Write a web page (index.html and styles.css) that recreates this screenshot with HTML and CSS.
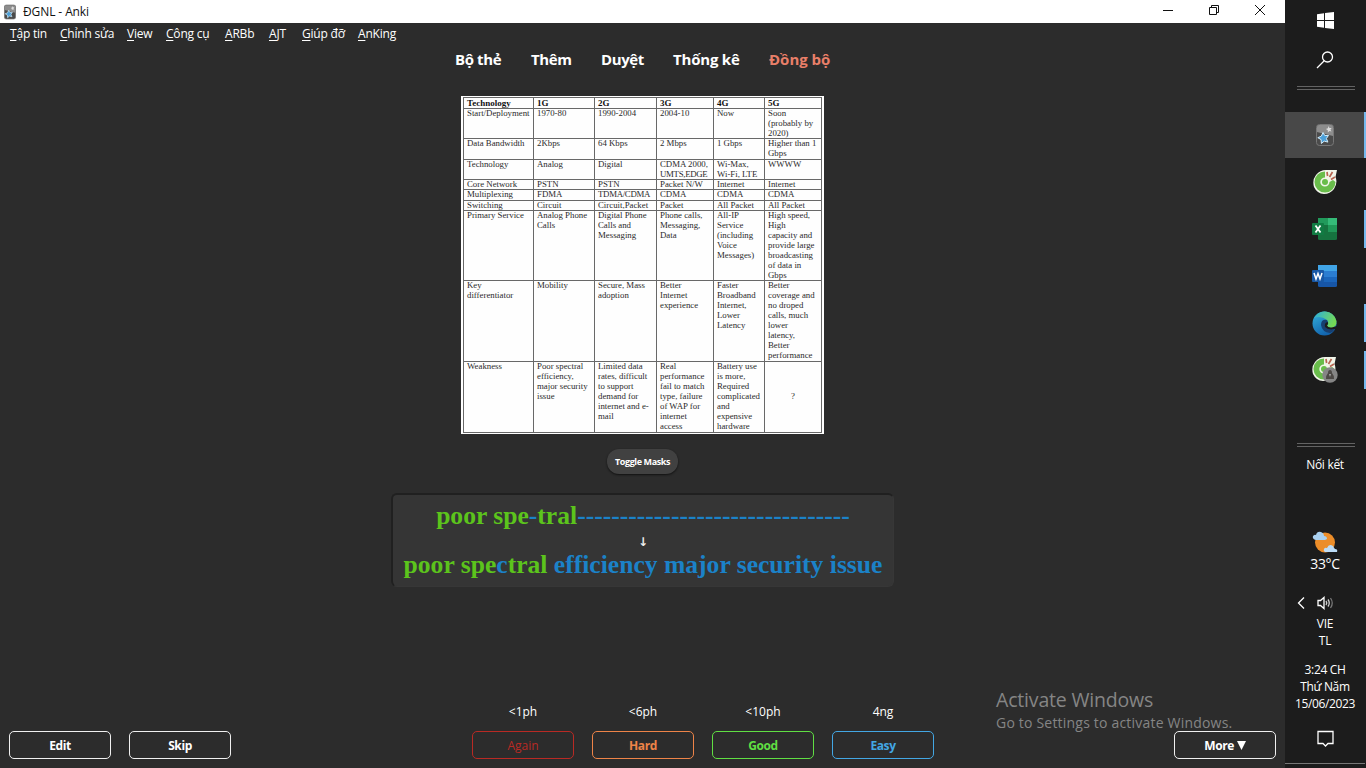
FILE: index.html
```html
<!DOCTYPE html>
<html lang="vi">
<head>
<meta charset="utf-8">
<title>ĐGNL - Anki</title>
<link rel="stylesheet" href="styles.css">
</head>
<body>
<svg class="defs" aria-hidden="true">
  <defs>
    <linearGradient id="edgeBlue" x1="0" y1="0" x2="0.5" y2="1"><stop offset="0" stop-color="#35b3dc"/><stop offset="1" stop-color="#1263ad"/></linearGradient>
    <linearGradient id="edgeGreen" x1="0" y1="0" x2="1" y2="0.4"><stop offset="0" stop-color="#2baee0"/><stop offset="1" stop-color="#74da55"/></linearGradient>
    <symbol id="anki" viewBox="0 0 18 22">
      <rect x=".5" y=".5" width="17" height="21" rx="3" fill="#4b4b4b" stroke="#777"/>
      <path d="M1 3Q1 1 3 1H15Q17 1 17 3V12L1 8Z" fill="#8d8d8d"/>
      <path d="M12.6 2l.8 2 2.2-.1-1.2 1.8 1.1 1.9-2.1-.6-1.6 1.5V6.2L9.900 5.100l2-.8z" fill="#ddd"/>
      <path d="M7 8.500l1.800 3.100 3.700-.2-2.100 3.100 1.500 3.600-3.700-1-2.800 2.400-.3-3.900-3.300-1.900 3.500-1.500z" fill="#4b9fd8" stroke="#d3edfb"/>
    </symbol>
    <symbol id="coccoc" viewBox="0 0 24 24">
      <path d="M13 0H24L22.500 7Q25 13 21 19Q17 24 11 24Q4 23.500 1 17Q-1 10 3 5Q7 0 13 0Z" fill="#f1f5e9"/>
      <path d="M12 1.500A10.500 10.500 0 1 0 22.500 12L20 10L16.500 12A4.600 4.600 0 1 1 12 7.400Z" fill="#69bd4b"/>
      <circle cx="12" cy="12" r="3" fill="#69bd4b"/>
      <path d="M14 2l.6 4M19.500 2l-3 5M22 7l-4 2.500" stroke="#b76551" stroke-width="1.700"/>
    </symbol>
  </defs>
</svg>
<div class="desktop">
  <main class="window">
    <header class="titlebar">
      <svg class="title-icon"><use href="#anki"/></svg>
      <span class="title-text">ĐGNL - Anki</span>
      <div class="controls">
        <svg viewBox="0 0 12 12"><path d="M1 6.500H11"/></svg>
        <svg viewBox="0 0 12 12"><path d="M1.500 3.500H8.500V10.500H1.500ZM3.500 3.500V1.500H10.500V8.500H8.500"/></svg>
        <svg viewBox="0 0 12 12"><path d="M1 1L11 11M11 1L1 11"/></svg>
      </div>
    </header>
    <nav class="menubar">
      <span><u>T</u>ập tin</span><span><u>C</u>hỉnh sửa</span><span><u>V</u>iew</span><span><u>C</u>ông cụ</span><span><u>A</u>RBb</span><span><u>A</u>JT</span><span><u>G</u>iúp đỡ</span><span><u>A</u>nKing</span>
    </nav>
    <nav class="toolbar">
      <span>Bộ thẻ</span><span>Thêm</span><span>Duyệt</span><span class="stats">Thống kê</span><span class="sync">Đồng bộ</span>
    </nav>
    <section class="card">
      <div class="sheet">
        <div class="grid">
          <b>Technology</b><b>1G</b><b>2G</b><b>3G</b><b>4G</b><b>5G</b>
          <div>Start/Deployment</div><div>1970-80</div><div>1990-2004</div><div>2004-10</div><div>Now</div><div>Soon<br>(probably by<br>2020)</div>
          <div>Data Bandwidth</div><div>2Kbps</div><div>64 Kbps</div><div>2 Mbps</div><div>1 Gbps</div><div>Higher than 1<br>Gbps</div>
          <div>Technology</div><div>Analog</div><div>Digital</div><div>CDMA 2000,<br><i>UMTS,EDGE</i></div><div>Wi-Max,<br>Wi-Fi, LTE</div><div>WWWW</div>
          <div>Core Network</div><div>PSTN</div><div>PSTN</div><div>Packet N/W</div><div>Internet</div><div>Internet</div>
          <div>Multiplexing</div><div>FDMA</div><div><i>TDMA/CDMA</i></div><div>CDMA</div><div>CDMA</div><div>CDMA</div>
          <div>Switching</div><div>Circuit</div><div>Circuit,Packet</div><div>Packet</div><div>All Packet</div><div>All Packet</div>
          <div>Primary Service</div><div>Analog Phone<br>Calls</div><div>Digital Phone<br>Calls and<br>Messaging</div><div>Phone calls,<br>Messaging,<br>Data</div><div>All-IP<br>Service<br>(including<br>Voice<br>Messages)</div><div>High speed,<br>High<br>capacity and<br>provide large<br>broadcasting<br>of data in<br>Gbps</div>
          <div>Key<br>differentiator</div><div>Mobility</div><div>Secure, Mass<br>adoption</div><div>Better<br>Internet<br>experience</div><div>Faster<br>Broadband<br>Internet,<br>Lower<br>Latency</div><div>Better<br>coverage and<br>no droped<br>calls, much<br>lower<br>latency,<br>Better<br>performance</div>
          <div>Weakness</div><div>Poor spectral<br>efficiency,<br>major security<br>issue</div><div>Limited data<br>rates, difficult<br>to support<br>demand for<br>internet and e-<br>mail</div><div>Real<br>performance<br>fail to match<br>type, failure<br>of WAP for<br>internet<br>access</div><div>Battery use<br>is more,<br>Required<br>complicated<br>and<br>expensive<br>hardware</div><div class="unknown">?</div>
        </div>
      </div>
      <button class="toggle">Toggle Masks</button>
      <div class="answer">
        <div class="typed"><span class="good">poor spe</span>-<span class="good">tral</span>--------------------------------</div>
        <div class="arrow">↓</div>
        <div class="typed"><span class="good">poor spe</span>c<span class="good">tral</span> efficiency major security issue</div>
      </div>
    </section>
    <footer class="bottom">
      <div class="group left"><button>Edit</button><button>Skip</button></div>
      <div class="group ease">
        <div><span>&lt;1ph</span><button class="again">Again</button></div>
        <div><span>&lt;6ph</span><button class="hard">Hard</button></div>
        <div><span>&lt;10ph</span><button class="easygood">Good</button></div>
        <div><span>4ng</span><button class="easy">Easy</button></div>
      </div>
      <div class="group right"><button>More <svg class="tri" viewBox="0 0 9 9"><path d="M0 0H9L4.500 9Z"/></svg></button></div>
    </footer>
    <div class="watermark"><p class="wm-title">Activate Windows</p><p class="wm-sub">Go to Settings to activate Windows.</p></div>
  </main>
  <aside class="taskbar">
    <div class="start"><svg width="17" height="17" viewBox="0 0 17 17" fill="#fff"><path d="M0 2.300L7 1.300V8H0ZM8 1.100L17 0V8H8ZM0 9H7V15.700L0 14.700ZM8 9H17V17L8 15.900Z"/></svg></div>
    <div class="search"><svg width="18" height="18" viewBox="0 0 18 18" fill="none" stroke="#fff" stroke-width="1.300"><circle cx="11.500" cy="6" r="5"/><path d="M8 10L1 17"/></svg></div>
    <div class="divider"></div>
    <div class="apps">
      <div class="app active"><svg width="18" height="22"><use href="#anki"/></svg></div>
      <div class="app"><svg width="24" height="24"><use href="#coccoc"/></svg></div>
      <div class="app open"><svg width="25" height="22" viewBox="0 0 25 22"><rect x="6" width="19" height="22" rx="1.500" fill="#16733f"/><path d="M6 0H16V7H6Z" fill="#219a5b"/><path d="M16 0H25V7H16Z" fill="#35bb78"/><path d="M16 7H25V14H16Z" fill="#209858"/><rect y="5" width="12" height="12" rx="1" fill="#117b43"/><path d="M3.500 7.500L8.500 14.500M8.500 7.500L3.500 14.500" stroke="#fff" stroke-width="1.800"/></svg></div>
      <div class="app"><svg width="25" height="22" viewBox="0 0 25 22"><rect x="6" width="19" height="22" rx="1.500" fill="#1756a7"/><path d="M6 0H25V6H6Z" fill="#41a5e7"/><path d="M6 6H25V12H6Z" fill="#2b7dd1"/><path d="M6 12H25V17H6Z" fill="#1b66bc"/><rect y="5" width="12" height="12" rx="1" fill="#1858a6"/><path d="M2 8L4 14L6 8.500L8 14L10 8" fill="none" stroke="#fff" stroke-width="1.500"/></svg></div>
      <div class="app open"><svg width="25" height="25" viewBox="0 0 25 25"><circle cx="12.500" cy="12.500" r="12" fill="url(#edgeBlue)"/><path d="M2 7Q6 0 13 .5Q22 1 24.500 10Q25 16 19 17Q15 17 15 14.500Q17 12 15 9Q9 4 2 7Z" fill="url(#edgeGreen)"/><path d="M15 9Q9 8 9 14Q10 21 18 22Q21 21 23 18Q16 19 14.500 15Q17 12 15 9Z" fill="#173f70"/><path d="M15.500 11Q17 12 15 14.500Q16 17 20 16.500L25 15V18.500L23 18Q16 19.500 13 16Q12 12 15.500 11Z" fill="#1c1c1c"/></svg></div>
      <div class="app open"><svg width="26" height="26" viewBox="0 0 26 26"><use href="#coccoc" width="24" height="24"/><circle cx="18" cy="18" r="7.700" fill="#858585"/><path d="M14 22Q14 18 16 16Q16 13 18 13Q20 13 20 16Q22 18 22 22Z" fill="#4c4845"/><path d="M17 17L18 20L19 17Z" fill="#aaa"/></svg></div>
    </div>
    <div class="divider lower"></div>
    <div class="connect">Nối kết</div>
    <div class="weather"><svg width="26" height="24" viewBox="0 0 26 24"><circle cx="13" cy="11.500" r="10" fill="#ec8d29"/><path d="M4 9Q0 8 1 5Q3 3 4 4Q5 0 9 1Q12 2 12 5Q15 5 15 8L13 9Z" fill="#a9d0f0"/><path d="M13 21Q11 20 12 18Q13 16 15 17Q17 12 21 15Q22 17 23 18Q26 18 25 21Z" fill="#bddcf6"/></svg><span>33°C</span></div>
    <div class="tray"><svg width="8" height="12" viewBox="0 0 8 12"><path d="M7 .5L1.500 6L7 11.500"/></svg><svg width="18" height="14" viewBox="0 0 18 14"><path d="M1 4.500H3.500L7 1.500V12.500L3.500 9.500H1Z"/><path d="M9 5Q10.500 7 9 9M11 3.500Q13.500 7 11 10.500" opacity=".8"/><path d="M13.500 2Q17 7 13.500 12" opacity=".4"/></svg></div>
    <div class="lang">VIE<br>TL</div>
    <div class="clock">3:24 CH<br>Thứ Năm<br><span>15/06/2023</span></div>
    <div class="notice"><svg width="17" height="17" viewBox="0 0 17 17"><path d="M1 1.500H16V13.500H11L8.500 16L6 13.500H1Z"/></svg></div>
  </aside>
</div>
</body>
</html>
```

FILE: styles.css
```css
* { box-sizing: border-box; }
body { margin: 0; width: 1366px; height: 768px; overflow: hidden; background: #1c1c1c; font-family: "Open Sans", "Noto Sans", sans-serif; color: #fff; }
.defs { position: absolute; width: 0; height: 0; }
.desktop { display: flex; height: 768px; }
.window { position: relative; width: 1285px; height: 768px; background: #2c2c2c; display: flex; flex-direction: column; }
.titlebar { height: 23px; flex: none; background: #fff; color: #111; display: flex; align-items: center; padding-left: 4px; }
.title-icon { width: 12px; height: 16px; }
.title-text { margin-left: 7px; font-size: 12px; letter-spacing: -.1px; }
.controls { margin-left: auto; display: flex; gap: 34px; padding: 0 19px 3px 0; }
.controls svg { width: 12px; height: 12px; fill: none; stroke: #111; }
.menubar { height: 22px; flex: none; display: grid; grid-template-columns: 50px 67px 39px 59px 44px 33px 56px 50px; padding-left: 10px; line-height: 22px; font-size: 12px; letter-spacing: -.2px; white-space: nowrap; }
.menubar u { text-underline-offset: 2px; }
.toolbar { flex: none; align-self: center; height: 30px; display: grid; grid-template-columns: 76px 70px 72px 96px 61px; font-size: 15px; line-height: 29px; font-weight: 700; letter-spacing: -.4px; white-space: nowrap; }
.stats { letter-spacing: -.2px; }
.sync { color: #e97f69; letter-spacing: 0; }
.card { display: flex; flex-direction: column; align-items: center; padding-top: 21px; }
.sheet { width: 363px; height: 338px; background: #fff; padding: 1px 2px; }
.grid { display: grid; width: 359px; height: 336px; padding: 1px; gap: 1px; background: #686868; grid-template-columns: 69px 60px 61px 56px 50px 56px; grid-template-rows: 10px 29px 20px 19px 9px 10px 9px 69px 80px 70px; font: 8.8px/10px "Liberation Serif", serif; color: #2b2b2b; white-space: nowrap; }
.grid > * { background: #fefefe; padding-left: 3px; min-width: 0; min-height: 0; }
.grid > div::before { content: ""; display: block; margin-top: -1px; }
.grid b { font-size: 9px; color: #111; }
.grid i { font-style: normal; letter-spacing: -.3px; }
.grid .unknown { padding: 30px 0 0; text-align: center; }
button { font-family: inherit; color: #fff; background: #2c2c2c; margin: 0; padding: 0; }
.toggle { margin-top: 15px; width: 71px; height: 25px; border: 0; border-radius: 12px; background: #414141; box-shadow: 0 1px 2px #111; font-size: 9px; font-weight: 700; letter-spacing: -.4px; }
.answer { margin-top: 19px; width: 503px; height: 94px; border-radius: 6px; border: 1px solid #373737; border-top: 2px solid #202020; border-left: 2px solid #202020; background: #353535; font-family: "Liberation Serif", serif; font-weight: 700; font-size: 25.6px; color: #1b82c8; text-align: center; white-space: nowrap; padding-top: 6px; }
.typed { line-height: 30px; }
.good { color: #5cc41c; }
.arrow { font: 700 12px/16px "DejaVu Sans", sans-serif; padding-top: 3px; color: #eee; }
.bottom { margin-top: auto; height: 68px; flex: none; position: relative; display: grid; grid-template-columns: 472px 1fr 111px; align-items: end; padding-bottom: 9px; }
.bottom button { width: 102px; height: 28px; border: 1px solid #f0f0f0; border-radius: 5px; font-size: 12px; font-weight: 700; letter-spacing: -.4px; }
.group { display: flex; gap: 18px; }
.left { padding-left: 9px; }
.ease > div { display: flex; flex-direction: column; align-items: center; gap: 10px; font-size: 12px; line-height: 18px; }
.bottom .again { color: #b92a24; border-color: #b92a24; font-weight: 400; letter-spacing: 0; }
.bottom .hard { color: #ee8448; border-color: #ee8448; }
.bottom .easygood { color: #60df43; border-color: #60df43; }
.bottom .easy { color: #43a7e4; border-color: #43a7e4; }
.tri { width: 9px; height: 9px; fill: #fff; }
.watermark { position: absolute; left: 996px; top: 687px; color: #858585; white-space: nowrap; pointer-events: none; }
.watermark p { margin: 0; }
.wm-title { font-size: 19.5px; line-height: 25px; letter-spacing: -.18px; }
.wm-sub { font-size: 14px; line-height: 21px; letter-spacing: .2px; }
.taskbar { width: 81px; height: 768px; padding-right: 1px; background: #1c1c1c; display: flex; flex-direction: column; text-align: center; font-size: 12px; letter-spacing: -.3px; line-height: 17px; }
.taskbar svg { display: block; }
.start { height: 40px; display: grid; place-items: center; }
.search { height: 40px; display: grid; place-items: center; }
.divider { width: 58px; height: 4px; margin: 6px 0 22px 12px; border-top: 1px solid #636363; border-bottom: 1px solid #636363; }
.apps { display: flex; flex-direction: column; gap: 1px; margin-right: -1px; }
.app { height: 46px; display: grid; place-items: center; border-right: 2px solid transparent; }
.active { background: #484848; border-right-color: #76b9ed; }
.open { background: linear-gradient(#76b9ed, #76b9ed) right center / 2px 38px no-repeat border-box; }
.divider.lower { margin: 50px 0 0 12px; }
.connect { margin-top: 9px; }
.weather { margin-top: 58px; display: flex; flex-direction: column; align-items: center; font-size: 14px; }
.tray { margin-top: 24px; padding-left: 12px; display: flex; gap: 12px; align-items: center; height: 14px; }
.tray svg, .notice svg { fill: none; stroke: #fff; stroke-width: 1.3; }
.lang { margin-top: 5px; }
.clock { margin-top: 12px; letter-spacing: -.35px; }
.notice { margin-top: auto; height: 39px; display: flex; justify-content: center; border-bottom: 1px solid #777; margin-bottom: 4px; padding-top: 5px; }
```
